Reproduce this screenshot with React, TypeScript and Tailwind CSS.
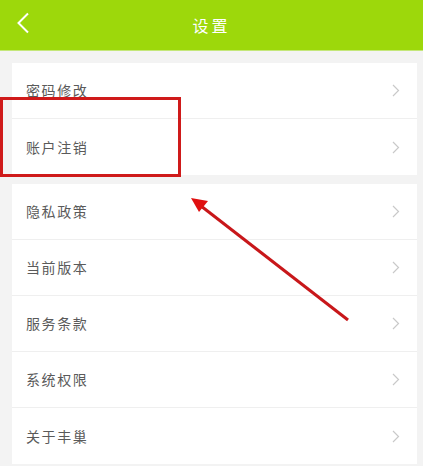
const groups = [
  ['密码修改', '账户注销'],
  ['隐私政策', '当前版本', '服务条款', '系统权限', '关于丰巢'],
];

const Row = ({ label, last }: { label: string; last: boolean }) => (
  <div className={`flex items-center justify-between h-[56px] pl-[14px] pr-[17px] ${last ? '' : 'border-b border-[#efefef]'}`}>
    <span className="text-[14px] tracking-[1.6px] text-[#5a5a5a]">{label}</span>
    <svg width="8" height="13" viewBox="0 0 8 13" fill="none">
      <path d="M1 1l5.5 5.5L1 12" stroke="#c9c9c9" strokeWidth="1.2" />
    </svg>
  </div>
);

export default function App() {
  return (
    <div
      className="relative w-[423px] h-[466px] overflow-hidden bg-[#f3f3f3]"
      style={{ fontFamily: '"Noto Sans CJK SC", "Noto Sans", sans-serif' }}
    >
      <header className="relative flex items-center justify-center h-[51px] bg-[#9dd80b] border-b border-[#c4e77a]">
        <svg className="absolute left-[16px] top-[12px]" width="14" height="22" viewBox="0 0 14 22" fill="none">
          <path d="M12 1.5L2.5 11l9.5 9.5" stroke="#ffffff" strokeWidth="2" />
        </svg>
        <h1 className="text-[16px] tracking-[3px] text-white">设置</h1>
      </header>

      <main className="flex flex-col gap-[9px] pl-[12px] pr-[6px] pt-[12px]">
        {groups.map((items, gi) => (
          <section key={gi} className="bg-white flex flex-col">
            {items.map((label, i) => (
              <Row key={label} label={label} last={i === items.length - 1} />
            ))}
          </section>
        ))}
      </main>

      {/* annotation overlay */}
      <div className="absolute left-0 top-[97px] w-[181px] h-[80px] border-[3px] border-[#cf1a1a]" />
      <svg className="absolute left-0 top-0" width="423" height="466" viewBox="0 0 423 466">
        <line x1="348" y1="320" x2="201" y2="206" stroke="#c8171a" strokeWidth="3" />
        <polygon points="191,198 208,201 199,212" fill="#e01010" />
      </svg>
    </div>
  );
}
